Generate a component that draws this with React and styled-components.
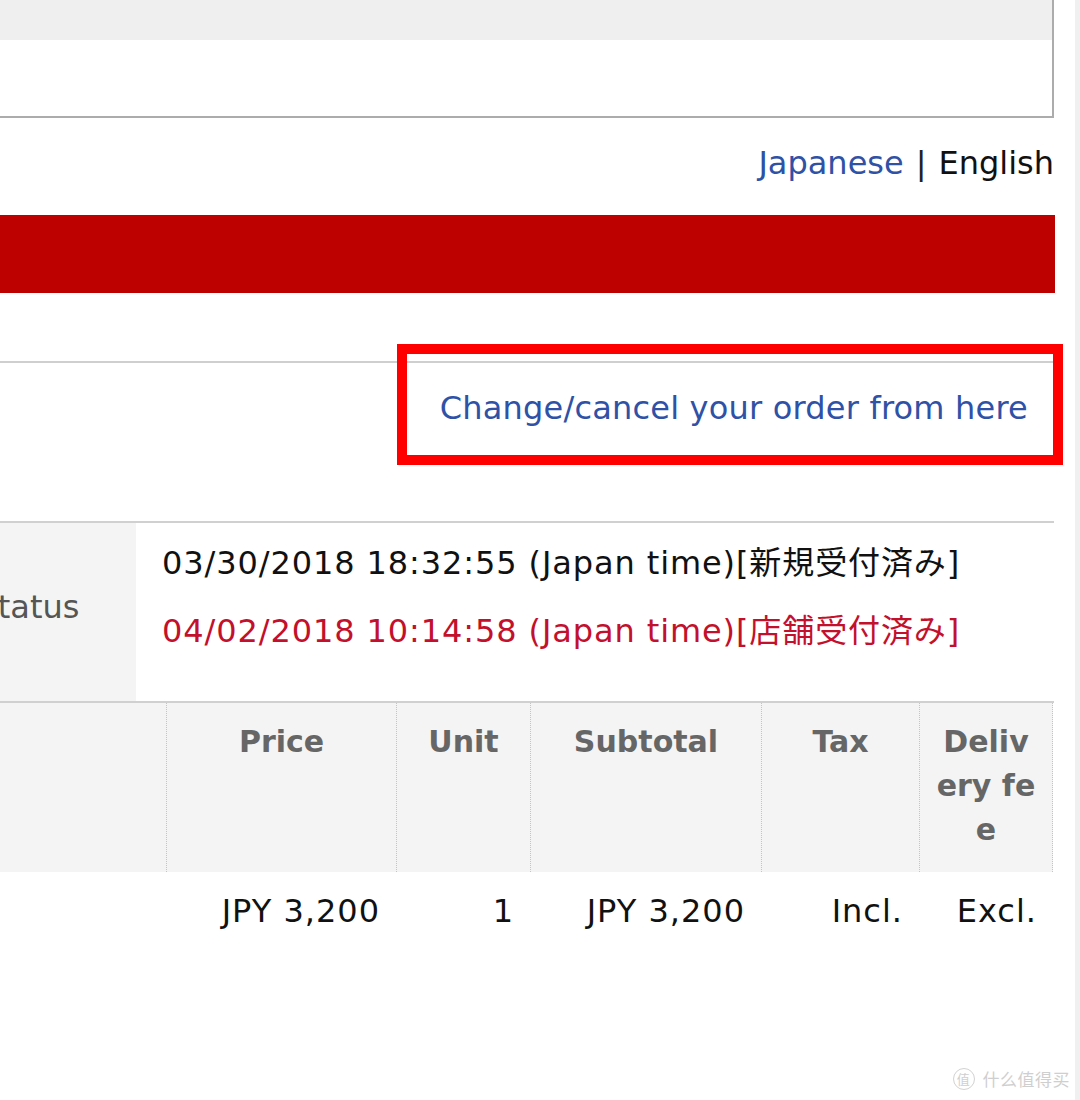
import React from "react";
import styled, { createGlobalStyle } from "styled-components";

const GlobalStyle = createGlobalStyle`
  html, body {
    margin: 0;
    padding: 0;
    background: #fff;
    overflow: hidden;
  }
  body {
    font-family: "DejaVu Sans", "Noto Sans CJK JP", sans-serif;
    color: #111;
  }
`;

const Screen = styled.div`
  position: relative;
  display: flex;
  width: 1080px;
  height: 1100px;
  overflow: hidden;
`;

const Viewport = styled.div`
  width: 1075px;
  overflow: hidden;
`;

const ScrollTrack = styled.div`
  width: 5px;
  background: #f0f0f0;
`;

// the page is wider than the window, scrolled a bit to the right
const Page = styled.div`
  width: 1194px;
  margin-left: -140px;
  margin-top: -2px;
`;

const NoticeBox = styled.div`
  border: 2px solid #acacac;
`;

const NoticeHead = styled.div`
  height: 40px;
  background: #efefef;
`;

const NoticeBody = styled.div`
  height: 76px;
  background: #fff;
`;

const LangBar = styled.div`
  height: 90px;
  padding-bottom: 7px;
  display: flex;
  align-items: center;
  justify-content: flex-end;
  gap: 12px;
  font-size: 32px;
  line-height: 40px;
`;

const LangLink = styled.a`
  color: ${(p) => (p.$active ? "#111" : "#2f51a6")};
  text-decoration: none;
`;

const Divider = styled.span`
  color: #222;
`;

const RedBar = styled.div`
  height: 78px;
  margin-right: -1px;
  background: #bd0000;
`;

const LinkRow = styled.div`
  position: relative;
  margin-top: 68px;
  height: 158px;
  border-top: 2px solid #cfcfcf;
  box-sizing: content-box;
  padding-right: 26px;
  text-align: right;
`;

const OrderLink = styled.a`
  display: inline-block;
  margin-top: 25px;
  font-size: 32px;
  line-height: 40px;
  letter-spacing: 0.2px;
  color: #2f51a6;
  text-decoration: none;
`;

const Highlight = styled.div`
  position: absolute;
  top: -19px;
  right: -9px;
  width: 666px;
  height: 121px;
  box-sizing: border-box;
  border: 10px solid #ff0000;
  pointer-events: none;
`;

const StatusRow = styled.div`
  display: grid;
  grid-template-columns: 276px 1fr;
  height: 178px;
  border-top: 2px solid #d0d0d0;
`;

const StatusLabel = styled.div`
  display: flex;
  align-items: center;
  padding: 0 0 10px 20px;
  background: #f4f4f4;
  color: #555;
  font-size: 32px;
`;

const StatusValue = styled.div`
  display: flex;
  flex-direction: column;
  gap: 28px;
  padding: 20px 0 0 26px;
`;

const StatusLine = styled.div`
  font-size: 32px;
  line-height: 40px;
  letter-spacing: 0.9px;
  white-space: nowrap;
  color: ${(p) => (p.$latest ? "#c3102c" : "#111")};
`;

const ItemTable = styled.div`
  display: grid;
  grid-template-columns: 306px 230px 134px 231px 158px 134px;
  border-top: 2px solid #d0d0d0;
`;

const HeadCell = styled.div`
  height: 169px;
  box-sizing: border-box;
  padding: 17px 16px 0;
  background: #f4f4f4;
  border-left: ${(p) => (p.$first ? "none" : "1px dotted #c4c4c4")};
  border-right: ${(p) => (p.$last ? "1px dotted #c4c4c4" : "none")};
  color: #666;
  font-size: 30px;
  font-weight: bold;
  line-height: 44px;
  text-align: center;
  word-break: break-all;
`;

const DataCell = styled.div`
  padding: 19px 16px 0;
  font-size: 32px;
  line-height: 40px;
  letter-spacing: 1px;
  text-align: right;
  white-space: nowrap;
`;

const Watermark = styled.div`
  position: absolute;
  right: 10px;
  bottom: 9px;
  display: flex;
  align-items: center;
  gap: 8px;
  color: #cfcfcf;
  font-family: "Noto Sans CJK SC", sans-serif;
  font-size: 17px;
  letter-spacing: 0.5px;
`;

const Seal = styled.span`
  display: inline-flex;
  align-items: center;
  justify-content: center;
  width: 20px;
  height: 20px;
  border: 1.5px solid #d2d2d2;
  border-radius: 50%;
  font-size: 13px;
`;

const headers = ["", "Price", "Unit", "Subtotal", "Tax", "Delivery fee"];
const row = ["", "JPY 3,200", "1", "JPY 3,200", "Incl.", "Excl."];

export default function App() {
  return (
    <>
      <GlobalStyle />
      <Screen>
        <Viewport>
          <Page>
            <NoticeBox>
              <NoticeHead />
              <NoticeBody />
            </NoticeBox>

            <LangBar>
              <LangLink href="#">Japanese</LangLink>
              <Divider>|</Divider>
              <LangLink $active>English</LangLink>
            </LangBar>

            <RedBar />

            <LinkRow>
              <OrderLink href="#">Change/cancel your order from here</OrderLink>
              <Highlight />
            </LinkRow>

            <StatusRow>
              <StatusLabel>Order status</StatusLabel>
              <StatusValue>
                <StatusLine>03/30/2018 18:32:55 (Japan time)[新規受付済み]</StatusLine>
                <StatusLine $latest>04/02/2018 10:14:58 (Japan time)[店舗受付済み]</StatusLine>
              </StatusValue>
            </StatusRow>

            <ItemTable>
              {headers.map((h, i) => (
                <HeadCell key={i} $first={i === 0} $last={i === headers.length - 1}>
                  {h}
                </HeadCell>
              ))}
              {row.map((v, i) => (
                <DataCell key={i}>{v}</DataCell>
              ))}
            </ItemTable>
          </Page>
        </Viewport>
        <ScrollTrack />
        <Watermark>
          <Seal>值</Seal>
          什么值得买
        </Watermark>
      </Screen>
    </>
  );
}
